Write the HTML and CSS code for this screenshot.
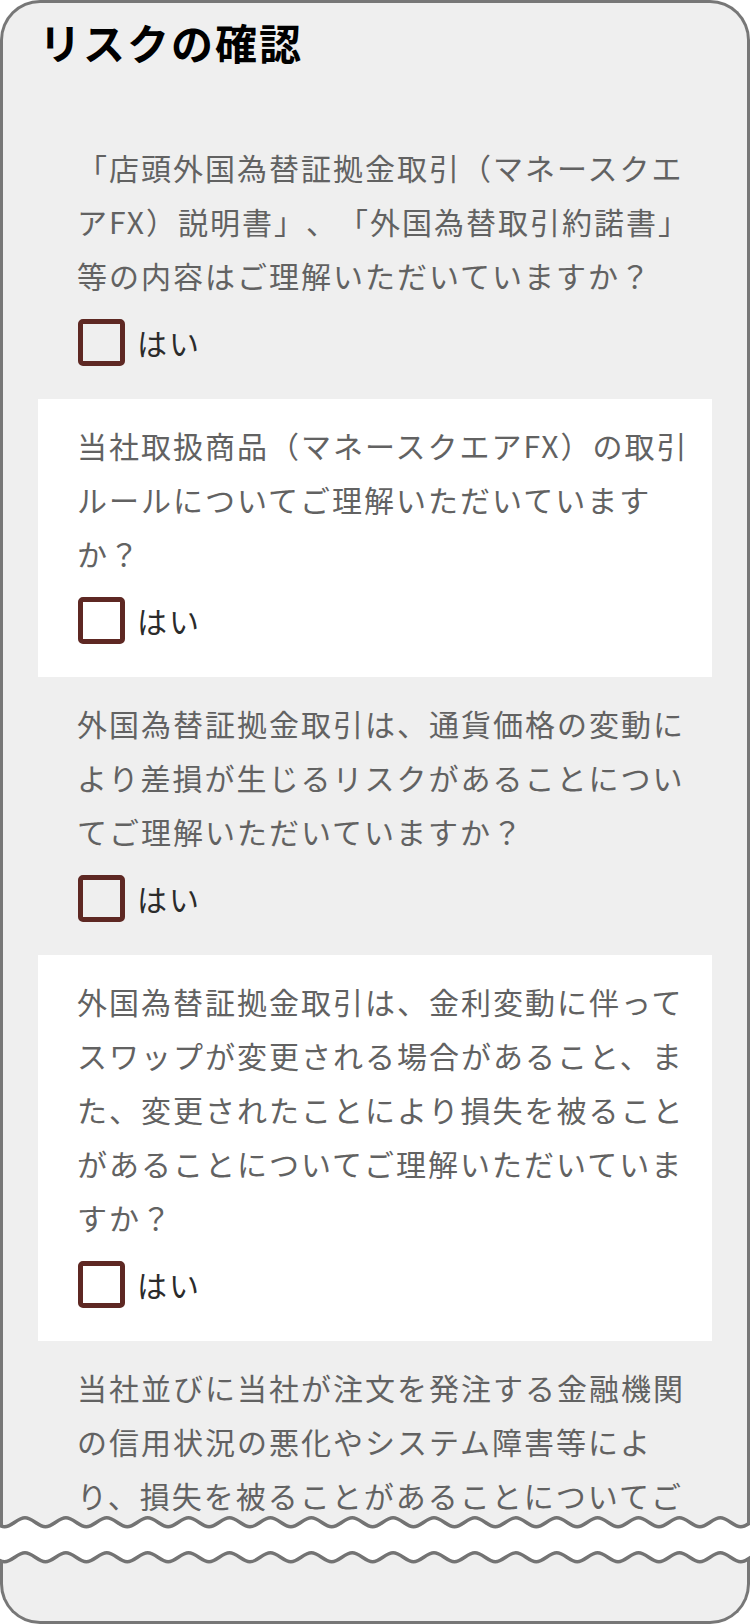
FILE: index.html
```html
<!DOCTYPE html>
<html lang="ja">
<head>
<meta charset="utf-8">
<title>リスクの確認</title>
<link rel="stylesheet" href="styles.css">
</head>
<body>
<div class="card-top">
  <h1 class="title">リスクの確認</h1>
  <ul class="items">
    <li class="item">
      <p class="q">「店頭外国為替証拠金取引（マネースクエアFX）説明書」、「外国為替取引約諾書」等の内容はご理解いただいていますか？</p>
      <label class="check"><span class="box"></span><span class="label">はい</span></label>
    </li>
    <li class="item item-white">
      <p class="q">当社取扱商品（マネースクエアFX）の取引ルールについてご理解いただいていますか？</p>
      <label class="check"><span class="box"></span><span class="label">はい</span></label>
    </li>
    <li class="item">
      <p class="q">外国為替証拠金取引は、通貨価格の変動により差損が生じるリスクがあることについてご理解いただいていますか？</p>
      <label class="check"><span class="box"></span><span class="label">はい</span></label>
    </li>
    <li class="item item-white">
      <p class="q">外国為替証拠金取引は、金利変動に伴ってスワップが変更される場合があること、また、変更されたことにより損失を被ることがあることについてご理解いただいていますか？</p>
      <label class="check"><span class="box"></span><span class="label">はい</span></label>
    </li>
    <li class="item">
      <p class="q">当社並びに当社が注文を発注する金融機関の信用状況の悪化やシステム障害等により、損失を被ることがあることについてご理解いただいていますか？</p>
      <label class="check"><span class="box"></span><span class="label">はい</span></label>
    </li>
  </ul>
</div>
<svg class="break" width="750" height="54" viewBox="0 0 750 54" aria-hidden="true">
  <path class="fill" d="M-15.9,5.8 c7.36,0 13.09,9 20.45,9 s13.09,-9 20.45,-9 s13.09,9 20.45,9 s13.09,-9 20.45,-9 s13.09,9 20.45,9 s13.09,-9 20.45,-9 s13.09,9 20.45,9 s13.09,-9 20.45,-9 s13.09,9 20.45,9 s13.09,-9 20.45,-9 s13.09,9 20.45,9 s13.09,-9 20.45,-9 s13.09,9 20.45,9 s13.09,-9 20.45,-9 s13.09,9 20.45,9 s13.09,-9 20.45,-9 s13.09,9 20.45,9 s13.09,-9 20.45,-9 s13.09,9 20.45,9 s13.09,-9 20.45,-9 s13.09,9 20.45,9 s13.09,-9 20.45,-9 s13.09,9 20.45,9 s13.09,-9 20.45,-9 s13.09,9 20.45,9 s13.09,-9 20.45,-9 s13.09,9 20.45,9 s13.09,-9 20.45,-9 s13.09,9 20.45,9 s13.09,-9 20.45,-9 s13.09,9 20.45,9 s13.09,-9 20.45,-9 s13.09,9 20.45,9 s13.09,-9 20.45,-9 s13.09,9 20.45,9 s13.09,-9 20.45,-9 s13.09,9 20.45,9 s13.09,-9 20.45,-9 L761,0 L-16,0 Z"/>
  <path class="fill" d="M-15.9,40.8 c7.36,0 13.09,9 20.45,9 s13.09,-9 20.45,-9 s13.09,9 20.45,9 s13.09,-9 20.45,-9 s13.09,9 20.45,9 s13.09,-9 20.45,-9 s13.09,9 20.45,9 s13.09,-9 20.45,-9 s13.09,9 20.45,9 s13.09,-9 20.45,-9 s13.09,9 20.45,9 s13.09,-9 20.45,-9 s13.09,9 20.45,9 s13.09,-9 20.45,-9 s13.09,9 20.45,9 s13.09,-9 20.45,-9 s13.09,9 20.45,9 s13.09,-9 20.45,-9 s13.09,9 20.45,9 s13.09,-9 20.45,-9 s13.09,9 20.45,9 s13.09,-9 20.45,-9 s13.09,9 20.45,9 s13.09,-9 20.45,-9 s13.09,9 20.45,9 s13.09,-9 20.45,-9 s13.09,9 20.45,9 s13.09,-9 20.45,-9 s13.09,9 20.45,9 s13.09,-9 20.45,-9 s13.09,9 20.45,9 s13.09,-9 20.45,-9 s13.09,9 20.45,9 s13.09,-9 20.45,-9 s13.09,9 20.45,9 s13.09,-9 20.45,-9 s13.09,9 20.45,9 s13.09,-9 20.45,-9 L761,54 L-16,54 Z"/>
  <path class="wave" d="M-15.9,5.8 c7.36,0 13.09,9 20.45,9 s13.09,-9 20.45,-9 s13.09,9 20.45,9 s13.09,-9 20.45,-9 s13.09,9 20.45,9 s13.09,-9 20.45,-9 s13.09,9 20.45,9 s13.09,-9 20.45,-9 s13.09,9 20.45,9 s13.09,-9 20.45,-9 s13.09,9 20.45,9 s13.09,-9 20.45,-9 s13.09,9 20.45,9 s13.09,-9 20.45,-9 s13.09,9 20.45,9 s13.09,-9 20.45,-9 s13.09,9 20.45,9 s13.09,-9 20.45,-9 s13.09,9 20.45,9 s13.09,-9 20.45,-9 s13.09,9 20.45,9 s13.09,-9 20.45,-9 s13.09,9 20.45,9 s13.09,-9 20.45,-9 s13.09,9 20.45,9 s13.09,-9 20.45,-9 s13.09,9 20.45,9 s13.09,-9 20.45,-9 s13.09,9 20.45,9 s13.09,-9 20.45,-9 s13.09,9 20.45,9 s13.09,-9 20.45,-9 s13.09,9 20.45,9 s13.09,-9 20.45,-9 s13.09,9 20.45,9 s13.09,-9 20.45,-9 s13.09,9 20.45,9 s13.09,-9 20.45,-9"/>
  <path class="wave" d="M-15.9,40.8 c7.36,0 13.09,9 20.45,9 s13.09,-9 20.45,-9 s13.09,9 20.45,9 s13.09,-9 20.45,-9 s13.09,9 20.45,9 s13.09,-9 20.45,-9 s13.09,9 20.45,9 s13.09,-9 20.45,-9 s13.09,9 20.45,9 s13.09,-9 20.45,-9 s13.09,9 20.45,9 s13.09,-9 20.45,-9 s13.09,9 20.45,9 s13.09,-9 20.45,-9 s13.09,9 20.45,9 s13.09,-9 20.45,-9 s13.09,9 20.45,9 s13.09,-9 20.45,-9 s13.09,9 20.45,9 s13.09,-9 20.45,-9 s13.09,9 20.45,9 s13.09,-9 20.45,-9 s13.09,9 20.45,9 s13.09,-9 20.45,-9 s13.09,9 20.45,9 s13.09,-9 20.45,-9 s13.09,9 20.45,9 s13.09,-9 20.45,-9 s13.09,9 20.45,9 s13.09,-9 20.45,-9 s13.09,9 20.45,9 s13.09,-9 20.45,-9 s13.09,9 20.45,9 s13.09,-9 20.45,-9 s13.09,9 20.45,9 s13.09,-9 20.45,-9 s13.09,9 20.45,9 s13.09,-9 20.45,-9"/>
  <rect class="side" x="0" y="0" width="3" height="13"/>
  <rect class="side" x="747" y="0" width="3" height="12"/>
  <rect class="side" x="0" y="48" width="3" height="6"/>
  <rect class="side" x="747" y="47" width="3" height="7"/>
</svg>
<div class="card-bottom"></div>
</body>
</html>
```

FILE: styles.css
```css
html, body {
  margin: 0;
  padding: 0;
  background: #ffffff;
}

body {
  width: 750px;
  font-family: "Noto Sans CJK JP", "Noto Sans", sans-serif;
}

.card-top {
  box-sizing: border-box;
  height: 1512px;
  padding-top: 14px;
  border: 3px solid #777777;
  border-bottom: 0;
  border-radius: 40px 40px 0 0;
  background: #efefef;
  overflow: hidden;
}

.title {
  margin: 0 0 54px;
  padding-left: 36px;
  font-size: 42px;
  line-height: 50px;
  font-weight: 700;
  letter-spacing: 2px;
  color: #000000;
}

.items {
  list-style: none;
  margin: 0 35px;
  padding: 0;
}

.item {
  padding: 19px 4px 33px 39px;
}

.item-white {
  background: #ffffff;
}

.q {
  margin: 0;
  font-size: 30px;
  line-height: 54px;
  letter-spacing: 2px;
  color: #626262;
  text-spacing-trim: space-all;
}

.check {
  display: flex;
  align-items: center;
  margin-top: 17px;
}

.box {
  box-sizing: border-box;
  width: 47px;
  height: 47px;
  margin-left: 1px;
  border: 5px solid #5e2823;
  border-radius: 5px;
}

.label {
  margin-left: 12px;
  font-size: 30px;
  line-height: 47px;
  letter-spacing: 2px;
  color: #2b2b2b;
}

.break {
  display: block;
  width: 750px;
  height: 54px;
}

.break .fill {
  fill: #efefef;
}

.break .wave {
  fill: none;
  stroke: #737373;
  stroke-width: 3.5;
}

.break .side {
  fill: #777777;
}

.card-bottom {
  box-sizing: border-box;
  height: 58px;
  border: 3px solid #777777;
  border-top: 0;
  border-radius: 0 0 40px 40px;
  background: #efefef;
}
```
